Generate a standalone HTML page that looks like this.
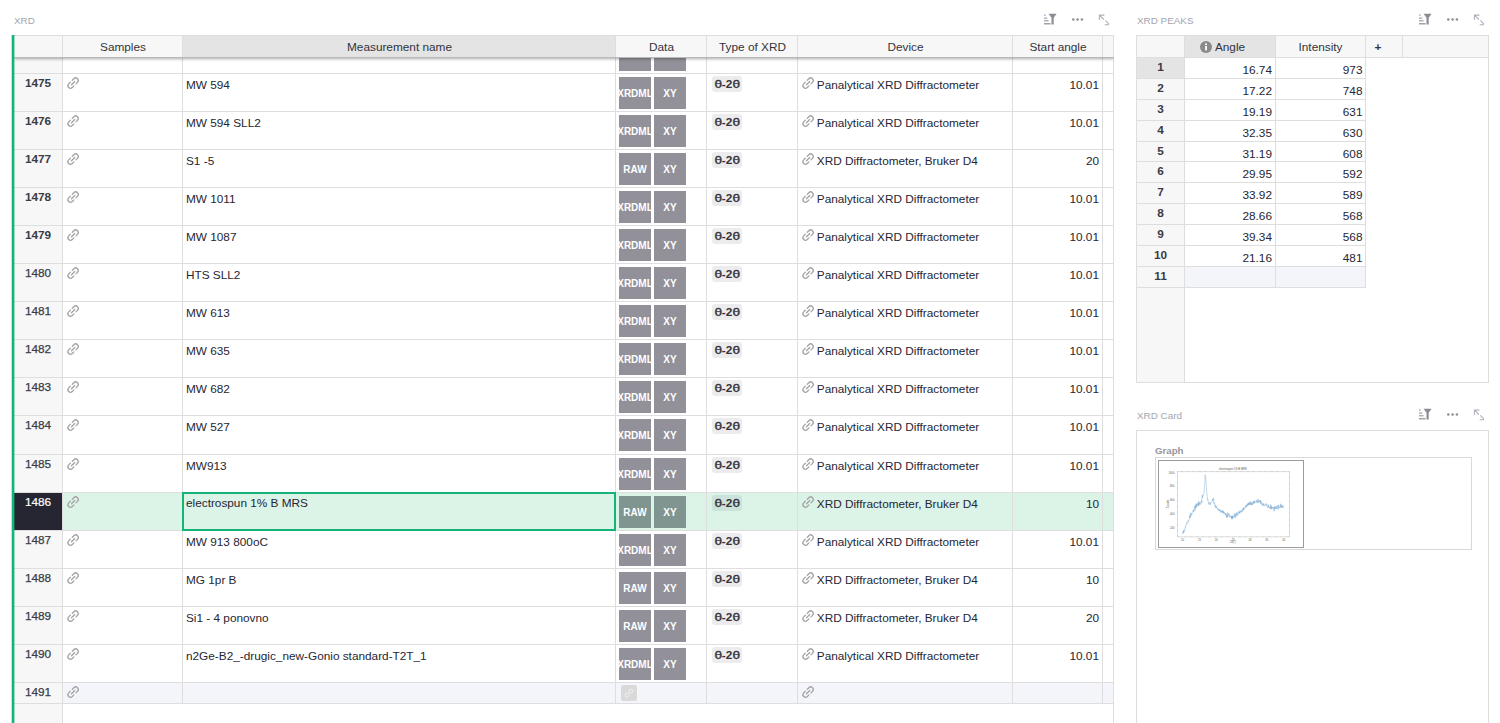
<!DOCTYPE html><html><head><meta charset="utf-8"><title>XRD</title><style>
*{box-sizing:border-box;margin:0;padding:0}
html,body{width:1500px;height:723px;overflow:hidden;background:#fff}
body{position:relative;font-family:"Liberation Sans",sans-serif;font-size:11.8px;color:#262633}
.abs{position:absolute}
.ttl{position:absolute;font-size:9.9px;color:#a4a4b0;line-height:12px;white-space:nowrap}
.ico{position:absolute;top:13px;width:70px;height:14px}
.grid{position:absolute;left:14px;top:35px;width:1100px;height:688px;overflow:hidden}
.bar{position:absolute;left:11px;top:35px;width:4px;height:688px;z-index:5;background:linear-gradient(90deg,rgba(22,179,120,.3) 0,rgba(22,179,120,.3) 1px,#16b378 1px,#16b378 3px,rgba(22,179,120,.4) 3px)}
.hl{position:absolute;left:0;height:1px;background:#dedede;width:1100px}
.vl{position:absolute;top:0;width:1px;background:#dedede}
.rn{position:absolute;left:0;width:48px;background:#f7f7f7;text-align:center;font-weight:bold;line-height:14px;padding-top:1.5px;color:#3b3b45}
.row{position:absolute;left:48px;width:1052px}
.c{position:absolute;top:0;height:38px;line-height:14px;white-space:nowrap;overflow:hidden}
.lk{position:absolute;width:16.2px;height:16.2px;color:#a3a3a3}
.btn{position:absolute;top:3px;width:32px;height:32px;background:#929199;color:#fff;font-weight:bold;font-size:10px;line-height:32px;text-align:center;overflow:hidden;white-space:nowrap}
.btn span{position:absolute;left:50%;top:1px;transform:translateX(-50%)}
.chip{position:absolute;left:5px;top:2px;height:16px;padding:0 2.6px 0 2.8px;border-radius:3px;background:#ececec;font-weight:bold;line-height:16px;color:#33333d}
.chip i{font-style:normal;font-weight:normal;display:inline-block;transform:scaleX(1.16);margin:0 .25px;-webkit-text-stroke:.35px #33333d}
.sel .btn{background:#80958f}
.sel .chip{background:#cbe3da}
.hd{position:absolute;top:0;height:22px;background:#f7f7f7;text-align:center;line-height:22px;padding-top:1px;color:#33333d;white-space:nowrap}
.hdr{position:absolute;left:0;top:0;width:1100px;height:23px;box-shadow:0 1px 3px rgba(0,0,0,.33);background:#f7f7f7;border-bottom:1px solid #b9b9b9}
.sel{background:#dcf3e8}
.pk{position:absolute;left:1136px;top:35px;width:353px;height:348px;border:1px solid #dedede;background:#fff;overflow:hidden}
.card{position:absolute;left:1136px;top:430px;width:353px;height:300px;border:1px solid #dedede;background:#fff}
</style></head><body>
<div class="ttl" style="left:14px;top:14.5px">XRD</div>
<svg class="ico" style="left:1039px;top:13px" viewBox="0 0 70 14"><g fill="#8c8c95"><rect x="5" y="1.6" width="1.6" height="1"/><rect x="5" y="4.6" width="3.2" height="1"/><rect x="5" y="7.3" width="4.6" height="1"/><rect x="5" y="10.2" width="6.6" height="1.2"/><path d="M9.6 0.8h8l-2.9 4v6.8h-2.2V4.8z"/></g><g fill="#8c8c95"><circle cx="34.3" cy="6.5" r="1.25"/><circle cx="38.6" cy="6.5" r="1.25"/><circle cx="42.9" cy="6.5" r="1.25"/></g><g fill="none" stroke="#b0b0be" stroke-width="1.05"><path d="M60.4 2.1l4.5 4.4M60.4 7V2.1h5M66.3 7.3l4.4 4.4M70.7 6.8v4.9h-5"/></g></svg>
<div class="ttl" style="left:1137px;top:14.5px">XRD PEAKS</div>
<svg class="ico" style="left:1414px;top:13px" viewBox="0 0 70 14"><g fill="#8c8c95"><rect x="5" y="1.6" width="1.6" height="1"/><rect x="5" y="4.6" width="3.2" height="1"/><rect x="5" y="7.3" width="4.6" height="1"/><rect x="5" y="10.2" width="6.6" height="1.2"/><path d="M9.6 0.8h8l-2.9 4v6.8h-2.2V4.8z"/></g><g fill="#8c8c95"><circle cx="34.3" cy="6.5" r="1.25"/><circle cx="38.6" cy="6.5" r="1.25"/><circle cx="42.9" cy="6.5" r="1.25"/></g><g fill="none" stroke="#b0b0be" stroke-width="1.05"><path d="M60.4 2.1l4.5 4.4M60.4 7V2.1h5M66.3 7.3l4.4 4.4M70.7 6.8v4.9h-5"/></g></svg>
<div class="ttl" style="left:1137px;top:410px">XRD Card</div>
<svg class="ico" style="left:1414px;top:408px" viewBox="0 0 70 14"><g fill="#8c8c95"><rect x="5" y="1.6" width="1.6" height="1"/><rect x="5" y="4.6" width="3.2" height="1"/><rect x="5" y="7.3" width="4.6" height="1"/><rect x="5" y="10.2" width="6.6" height="1.2"/><path d="M9.6 0.8h8l-2.9 4v6.8h-2.2V4.8z"/></g><g fill="#8c8c95"><circle cx="34.3" cy="6.5" r="1.25"/><circle cx="38.6" cy="6.5" r="1.25"/><circle cx="42.9" cy="6.5" r="1.25"/></g><g fill="none" stroke="#b0b0be" stroke-width="1.05"><path d="M60.4 2.1l4.5 4.4M60.4 7V2.1h5M66.3 7.3l4.4 4.4M70.7 6.8v4.9h-5"/></g></svg>
<div class="bar"></div>
<div class="grid">
<div class="abs" style="left:0;top:0;width:48px;height:688px;background:#f7f7f7"></div>
<div class="row" style="top:1px;height:37px"><div class="c" style="left:1px;width:119px"><svg class="lk" style="left:1.9px;top:1.2px" viewBox="0 0 24 24"><g transform="rotate(-45 12 12)" fill="none" stroke="currentColor" stroke-width="1.9" stroke-linecap="round"><path d="M9.9 8.2H6.6a3.8 3.8 0 0 0 0 7.6h3.3"/><path d="M14.1 8.2h3.3a3.8 3.8 0 0 1 0 7.6h-3.3"/><path d="M8.6 12h6.8"/></g></svg></div><div class="c" style="left:121px;width:432px;padding:4.4px 0 0 3px"></div><div class="c" style="left:554px;width:90px"><div class="btn" style="left:3px"><span></span></div><div class="btn" style="left:38px"><span></span></div></div><div class="c" style="left:645px;width:90px"><div class="chip"><i>θ</i>-2<i>θ</i></div></div><div class="c" style="left:736px;width:214px;padding:4.4px 0 0 18.8px"></div><div class="c" style="left:951px;width:89px;padding:4.4px 3px 0 0;text-align:right"></div></div><div class="rn" style="top:1px;height:37px"></div>
<div class="row" style="top:39px;height:37px"><div class="c" style="left:1px;width:119px"><svg class="lk" style="left:1.9px;top:1.2px" viewBox="0 0 24 24"><g transform="rotate(-45 12 12)" fill="none" stroke="currentColor" stroke-width="1.9" stroke-linecap="round"><path d="M9.9 8.2H6.6a3.8 3.8 0 0 0 0 7.6h3.3"/><path d="M14.1 8.2h3.3a3.8 3.8 0 0 1 0 7.6h-3.3"/><path d="M8.6 12h6.8"/></g></svg></div><div class="c" style="left:121px;width:432px;padding:4.4px 0 0 3px">MW 594</div><div class="c" style="left:554px;width:90px"><div class="btn" style="left:3px"><span>XRDML</span></div><div class="btn" style="left:38px"><span>XY</span></div></div><div class="c" style="left:645px;width:90px"><div class="chip"><i>θ</i>-2<i>θ</i></div></div><div class="c" style="left:736px;width:214px;padding:4.4px 0 0 18.8px"><svg class="lk" style="left:1.9px;top:1.2px" viewBox="0 0 24 24"><g transform="rotate(-45 12 12)" fill="none" stroke="currentColor" stroke-width="1.9" stroke-linecap="round"><path d="M9.9 8.2H6.6a3.8 3.8 0 0 0 0 7.6h3.3"/><path d="M14.1 8.2h3.3a3.8 3.8 0 0 1 0 7.6h-3.3"/><path d="M8.6 12h6.8"/></g></svg>Panalytical XRD Diffractometer</div><div class="c" style="left:951px;width:89px;padding:4.4px 3px 0 0;text-align:right">10.01</div></div><div class="rn" style="top:39px;height:37px">1475</div>
<div class="row" style="top:77px;height:37px"><div class="c" style="left:1px;width:119px"><svg class="lk" style="left:1.9px;top:1.2px" viewBox="0 0 24 24"><g transform="rotate(-45 12 12)" fill="none" stroke="currentColor" stroke-width="1.9" stroke-linecap="round"><path d="M9.9 8.2H6.6a3.8 3.8 0 0 0 0 7.6h3.3"/><path d="M14.1 8.2h3.3a3.8 3.8 0 0 1 0 7.6h-3.3"/><path d="M8.6 12h6.8"/></g></svg></div><div class="c" style="left:121px;width:432px;padding:4.4px 0 0 3px">MW 594 SLL2</div><div class="c" style="left:554px;width:90px"><div class="btn" style="left:3px"><span>XRDML</span></div><div class="btn" style="left:38px"><span>XY</span></div></div><div class="c" style="left:645px;width:90px"><div class="chip"><i>θ</i>-2<i>θ</i></div></div><div class="c" style="left:736px;width:214px;padding:4.4px 0 0 18.8px"><svg class="lk" style="left:1.9px;top:1.2px" viewBox="0 0 24 24"><g transform="rotate(-45 12 12)" fill="none" stroke="currentColor" stroke-width="1.9" stroke-linecap="round"><path d="M9.9 8.2H6.6a3.8 3.8 0 0 0 0 7.6h3.3"/><path d="M14.1 8.2h3.3a3.8 3.8 0 0 1 0 7.6h-3.3"/><path d="M8.6 12h6.8"/></g></svg>Panalytical XRD Diffractometer</div><div class="c" style="left:951px;width:89px;padding:4.4px 3px 0 0;text-align:right">10.01</div></div><div class="rn" style="top:77px;height:37px">1476</div>
<div class="row" style="top:115px;height:37px"><div class="c" style="left:1px;width:119px"><svg class="lk" style="left:1.9px;top:1.2px" viewBox="0 0 24 24"><g transform="rotate(-45 12 12)" fill="none" stroke="currentColor" stroke-width="1.9" stroke-linecap="round"><path d="M9.9 8.2H6.6a3.8 3.8 0 0 0 0 7.6h3.3"/><path d="M14.1 8.2h3.3a3.8 3.8 0 0 1 0 7.6h-3.3"/><path d="M8.6 12h6.8"/></g></svg></div><div class="c" style="left:121px;width:432px;padding:4.4px 0 0 3px">S1 -5</div><div class="c" style="left:554px;width:90px"><div class="btn" style="left:3px"><span>RAW</span></div><div class="btn" style="left:38px"><span>XY</span></div></div><div class="c" style="left:645px;width:90px"><div class="chip"><i>θ</i>-2<i>θ</i></div></div><div class="c" style="left:736px;width:214px;padding:4.4px 0 0 18.8px"><svg class="lk" style="left:1.9px;top:1.2px" viewBox="0 0 24 24"><g transform="rotate(-45 12 12)" fill="none" stroke="currentColor" stroke-width="1.9" stroke-linecap="round"><path d="M9.9 8.2H6.6a3.8 3.8 0 0 0 0 7.6h3.3"/><path d="M14.1 8.2h3.3a3.8 3.8 0 0 1 0 7.6h-3.3"/><path d="M8.6 12h6.8"/></g></svg>XRD Diffractometer, Bruker D4</div><div class="c" style="left:951px;width:89px;padding:4.4px 3px 0 0;text-align:right">20</div></div><div class="rn" style="top:115px;height:37px">1477</div>
<div class="row" style="top:153px;height:37px"><div class="c" style="left:1px;width:119px"><svg class="lk" style="left:1.9px;top:1.2px" viewBox="0 0 24 24"><g transform="rotate(-45 12 12)" fill="none" stroke="currentColor" stroke-width="1.9" stroke-linecap="round"><path d="M9.9 8.2H6.6a3.8 3.8 0 0 0 0 7.6h3.3"/><path d="M14.1 8.2h3.3a3.8 3.8 0 0 1 0 7.6h-3.3"/><path d="M8.6 12h6.8"/></g></svg></div><div class="c" style="left:121px;width:432px;padding:4.4px 0 0 3px">MW 1011</div><div class="c" style="left:554px;width:90px"><div class="btn" style="left:3px"><span>XRDML</span></div><div class="btn" style="left:38px"><span>XY</span></div></div><div class="c" style="left:645px;width:90px"><div class="chip"><i>θ</i>-2<i>θ</i></div></div><div class="c" style="left:736px;width:214px;padding:4.4px 0 0 18.8px"><svg class="lk" style="left:1.9px;top:1.2px" viewBox="0 0 24 24"><g transform="rotate(-45 12 12)" fill="none" stroke="currentColor" stroke-width="1.9" stroke-linecap="round"><path d="M9.9 8.2H6.6a3.8 3.8 0 0 0 0 7.6h3.3"/><path d="M14.1 8.2h3.3a3.8 3.8 0 0 1 0 7.6h-3.3"/><path d="M8.6 12h6.8"/></g></svg>Panalytical XRD Diffractometer</div><div class="c" style="left:951px;width:89px;padding:4.4px 3px 0 0;text-align:right">10.01</div></div><div class="rn" style="top:153px;height:37px">1478</div>
<div class="row" style="top:191px;height:37px"><div class="c" style="left:1px;width:119px"><svg class="lk" style="left:1.9px;top:1.2px" viewBox="0 0 24 24"><g transform="rotate(-45 12 12)" fill="none" stroke="currentColor" stroke-width="1.9" stroke-linecap="round"><path d="M9.9 8.2H6.6a3.8 3.8 0 0 0 0 7.6h3.3"/><path d="M14.1 8.2h3.3a3.8 3.8 0 0 1 0 7.6h-3.3"/><path d="M8.6 12h6.8"/></g></svg></div><div class="c" style="left:121px;width:432px;padding:4.4px 0 0 3px">MW 1087</div><div class="c" style="left:554px;width:90px"><div class="btn" style="left:3px"><span>XRDML</span></div><div class="btn" style="left:38px"><span>XY</span></div></div><div class="c" style="left:645px;width:90px"><div class="chip"><i>θ</i>-2<i>θ</i></div></div><div class="c" style="left:736px;width:214px;padding:4.4px 0 0 18.8px"><svg class="lk" style="left:1.9px;top:1.2px" viewBox="0 0 24 24"><g transform="rotate(-45 12 12)" fill="none" stroke="currentColor" stroke-width="1.9" stroke-linecap="round"><path d="M9.9 8.2H6.6a3.8 3.8 0 0 0 0 7.6h3.3"/><path d="M14.1 8.2h3.3a3.8 3.8 0 0 1 0 7.6h-3.3"/><path d="M8.6 12h6.8"/></g></svg>Panalytical XRD Diffractometer</div><div class="c" style="left:951px;width:89px;padding:4.4px 3px 0 0;text-align:right">10.01</div></div><div class="rn" style="top:191px;height:37px">1479</div>
<div class="row" style="top:229px;height:37px"><div class="c" style="left:1px;width:119px"><svg class="lk" style="left:1.9px;top:1.2px" viewBox="0 0 24 24"><g transform="rotate(-45 12 12)" fill="none" stroke="currentColor" stroke-width="1.9" stroke-linecap="round"><path d="M9.9 8.2H6.6a3.8 3.8 0 0 0 0 7.6h3.3"/><path d="M14.1 8.2h3.3a3.8 3.8 0 0 1 0 7.6h-3.3"/><path d="M8.6 12h6.8"/></g></svg></div><div class="c" style="left:121px;width:432px;padding:4.4px 0 0 3px">HTS SLL2</div><div class="c" style="left:554px;width:90px"><div class="btn" style="left:3px"><span>XRDML</span></div><div class="btn" style="left:38px"><span>XY</span></div></div><div class="c" style="left:645px;width:90px"><div class="chip"><i>θ</i>-2<i>θ</i></div></div><div class="c" style="left:736px;width:214px;padding:4.4px 0 0 18.8px"><svg class="lk" style="left:1.9px;top:1.2px" viewBox="0 0 24 24"><g transform="rotate(-45 12 12)" fill="none" stroke="currentColor" stroke-width="1.9" stroke-linecap="round"><path d="M9.9 8.2H6.6a3.8 3.8 0 0 0 0 7.6h3.3"/><path d="M14.1 8.2h3.3a3.8 3.8 0 0 1 0 7.6h-3.3"/><path d="M8.6 12h6.8"/></g></svg>Panalytical XRD Diffractometer</div><div class="c" style="left:951px;width:89px;padding:4.4px 3px 0 0;text-align:right">10.01</div></div><div class="rn" style="top:229px;height:37px;font-weight:normal;-webkit-text-stroke:.25px #3b3b45">1480</div>
<div class="row" style="top:267px;height:37px"><div class="c" style="left:1px;width:119px"><svg class="lk" style="left:1.9px;top:1.2px" viewBox="0 0 24 24"><g transform="rotate(-45 12 12)" fill="none" stroke="currentColor" stroke-width="1.9" stroke-linecap="round"><path d="M9.9 8.2H6.6a3.8 3.8 0 0 0 0 7.6h3.3"/><path d="M14.1 8.2h3.3a3.8 3.8 0 0 1 0 7.6h-3.3"/><path d="M8.6 12h6.8"/></g></svg></div><div class="c" style="left:121px;width:432px;padding:4.4px 0 0 3px">MW 613</div><div class="c" style="left:554px;width:90px"><div class="btn" style="left:3px"><span>XRDML</span></div><div class="btn" style="left:38px"><span>XY</span></div></div><div class="c" style="left:645px;width:90px"><div class="chip"><i>θ</i>-2<i>θ</i></div></div><div class="c" style="left:736px;width:214px;padding:4.4px 0 0 18.8px"><svg class="lk" style="left:1.9px;top:1.2px" viewBox="0 0 24 24"><g transform="rotate(-45 12 12)" fill="none" stroke="currentColor" stroke-width="1.9" stroke-linecap="round"><path d="M9.9 8.2H6.6a3.8 3.8 0 0 0 0 7.6h3.3"/><path d="M14.1 8.2h3.3a3.8 3.8 0 0 1 0 7.6h-3.3"/><path d="M8.6 12h6.8"/></g></svg>Panalytical XRD Diffractometer</div><div class="c" style="left:951px;width:89px;padding:4.4px 3px 0 0;text-align:right">10.01</div></div><div class="rn" style="top:267px;height:37px;font-weight:normal;-webkit-text-stroke:.25px #3b3b45">1481</div>
<div class="row" style="top:305px;height:37px"><div class="c" style="left:1px;width:119px"><svg class="lk" style="left:1.9px;top:1.2px" viewBox="0 0 24 24"><g transform="rotate(-45 12 12)" fill="none" stroke="currentColor" stroke-width="1.9" stroke-linecap="round"><path d="M9.9 8.2H6.6a3.8 3.8 0 0 0 0 7.6h3.3"/><path d="M14.1 8.2h3.3a3.8 3.8 0 0 1 0 7.6h-3.3"/><path d="M8.6 12h6.8"/></g></svg></div><div class="c" style="left:121px;width:432px;padding:4.4px 0 0 3px">MW 635</div><div class="c" style="left:554px;width:90px"><div class="btn" style="left:3px"><span>XRDML</span></div><div class="btn" style="left:38px"><span>XY</span></div></div><div class="c" style="left:645px;width:90px"><div class="chip"><i>θ</i>-2<i>θ</i></div></div><div class="c" style="left:736px;width:214px;padding:4.4px 0 0 18.8px"><svg class="lk" style="left:1.9px;top:1.2px" viewBox="0 0 24 24"><g transform="rotate(-45 12 12)" fill="none" stroke="currentColor" stroke-width="1.9" stroke-linecap="round"><path d="M9.9 8.2H6.6a3.8 3.8 0 0 0 0 7.6h3.3"/><path d="M14.1 8.2h3.3a3.8 3.8 0 0 1 0 7.6h-3.3"/><path d="M8.6 12h6.8"/></g></svg>Panalytical XRD Diffractometer</div><div class="c" style="left:951px;width:89px;padding:4.4px 3px 0 0;text-align:right">10.01</div></div><div class="rn" style="top:305px;height:37px;font-weight:normal;-webkit-text-stroke:.25px #3b3b45">1482</div>
<div class="row" style="top:343px;height:37px"><div class="c" style="left:1px;width:119px"><svg class="lk" style="left:1.9px;top:1.2px" viewBox="0 0 24 24"><g transform="rotate(-45 12 12)" fill="none" stroke="currentColor" stroke-width="1.9" stroke-linecap="round"><path d="M9.9 8.2H6.6a3.8 3.8 0 0 0 0 7.6h3.3"/><path d="M14.1 8.2h3.3a3.8 3.8 0 0 1 0 7.6h-3.3"/><path d="M8.6 12h6.8"/></g></svg></div><div class="c" style="left:121px;width:432px;padding:4.4px 0 0 3px">MW 682</div><div class="c" style="left:554px;width:90px"><div class="btn" style="left:3px"><span>XRDML</span></div><div class="btn" style="left:38px"><span>XY</span></div></div><div class="c" style="left:645px;width:90px"><div class="chip"><i>θ</i>-2<i>θ</i></div></div><div class="c" style="left:736px;width:214px;padding:4.4px 0 0 18.8px"><svg class="lk" style="left:1.9px;top:1.2px" viewBox="0 0 24 24"><g transform="rotate(-45 12 12)" fill="none" stroke="currentColor" stroke-width="1.9" stroke-linecap="round"><path d="M9.9 8.2H6.6a3.8 3.8 0 0 0 0 7.6h3.3"/><path d="M14.1 8.2h3.3a3.8 3.8 0 0 1 0 7.6h-3.3"/><path d="M8.6 12h6.8"/></g></svg>Panalytical XRD Diffractometer</div><div class="c" style="left:951px;width:89px;padding:4.4px 3px 0 0;text-align:right">10.01</div></div><div class="rn" style="top:343px;height:37px;font-weight:normal;-webkit-text-stroke:.25px #3b3b45">1483</div>
<div class="row" style="top:381px;height:38px"><div class="c" style="left:1px;width:119px"><svg class="lk" style="left:1.9px;top:1.2px" viewBox="0 0 24 24"><g transform="rotate(-45 12 12)" fill="none" stroke="currentColor" stroke-width="1.9" stroke-linecap="round"><path d="M9.9 8.2H6.6a3.8 3.8 0 0 0 0 7.6h3.3"/><path d="M14.1 8.2h3.3a3.8 3.8 0 0 1 0 7.6h-3.3"/><path d="M8.6 12h6.8"/></g></svg></div><div class="c" style="left:121px;width:432px;padding:4.4px 0 0 3px">MW 527</div><div class="c" style="left:554px;width:90px"><div class="btn" style="left:3px"><span>XRDML</span></div><div class="btn" style="left:38px"><span>XY</span></div></div><div class="c" style="left:645px;width:90px"><div class="chip"><i>θ</i>-2<i>θ</i></div></div><div class="c" style="left:736px;width:214px;padding:4.4px 0 0 18.8px"><svg class="lk" style="left:1.9px;top:1.2px" viewBox="0 0 24 24"><g transform="rotate(-45 12 12)" fill="none" stroke="currentColor" stroke-width="1.9" stroke-linecap="round"><path d="M9.9 8.2H6.6a3.8 3.8 0 0 0 0 7.6h3.3"/><path d="M14.1 8.2h3.3a3.8 3.8 0 0 1 0 7.6h-3.3"/><path d="M8.6 12h6.8"/></g></svg>Panalytical XRD Diffractometer</div><div class="c" style="left:951px;width:89px;padding:4.4px 3px 0 0;text-align:right">10.01</div></div><div class="rn" style="top:381px;height:38px;font-weight:normal;-webkit-text-stroke:.25px #3b3b45">1484</div>
<div class="row" style="top:420px;height:37px"><div class="c" style="left:1px;width:119px"><svg class="lk" style="left:1.9px;top:1.2px" viewBox="0 0 24 24"><g transform="rotate(-45 12 12)" fill="none" stroke="currentColor" stroke-width="1.9" stroke-linecap="round"><path d="M9.9 8.2H6.6a3.8 3.8 0 0 0 0 7.6h3.3"/><path d="M14.1 8.2h3.3a3.8 3.8 0 0 1 0 7.6h-3.3"/><path d="M8.6 12h6.8"/></g></svg></div><div class="c" style="left:121px;width:432px;padding:4.4px 0 0 3px">MW913</div><div class="c" style="left:554px;width:90px"><div class="btn" style="left:3px"><span>XRDML</span></div><div class="btn" style="left:38px"><span>XY</span></div></div><div class="c" style="left:645px;width:90px"><div class="chip"><i>θ</i>-2<i>θ</i></div></div><div class="c" style="left:736px;width:214px;padding:4.4px 0 0 18.8px"><svg class="lk" style="left:1.9px;top:1.2px" viewBox="0 0 24 24"><g transform="rotate(-45 12 12)" fill="none" stroke="currentColor" stroke-width="1.9" stroke-linecap="round"><path d="M9.9 8.2H6.6a3.8 3.8 0 0 0 0 7.6h3.3"/><path d="M14.1 8.2h3.3a3.8 3.8 0 0 1 0 7.6h-3.3"/><path d="M8.6 12h6.8"/></g></svg>Panalytical XRD Diffractometer</div><div class="c" style="left:951px;width:89px;padding:4.4px 3px 0 0;text-align:right">10.01</div></div><div class="rn" style="top:420px;height:37px;font-weight:normal;-webkit-text-stroke:.25px #3b3b45">1485</div>
<div class="row sel" style="top:458px;height:37px"><div class="c" style="left:1px;width:119px"><svg class="lk" style="left:1.9px;top:1.2px" viewBox="0 0 24 24"><g transform="rotate(-45 12 12)" fill="none" stroke="currentColor" stroke-width="1.9" stroke-linecap="round"><path d="M9.9 8.2H6.6a3.8 3.8 0 0 0 0 7.6h3.3"/><path d="M14.1 8.2h3.3a3.8 3.8 0 0 1 0 7.6h-3.3"/><path d="M8.6 12h6.8"/></g></svg></div><div class="c" style="left:121px;width:432px;padding:3.4px 0 0 3px">electrospun 1% B MRS</div><div class="c" style="left:554px;width:90px"><div class="btn" style="left:3px"><span>RAW</span></div><div class="btn" style="left:38px"><span>XY</span></div></div><div class="c" style="left:645px;width:90px"><div class="chip"><i>θ</i>-2<i>θ</i></div></div><div class="c" style="left:736px;width:214px;padding:4.4px 0 0 18.8px"><svg class="lk" style="left:1.9px;top:1.2px" viewBox="0 0 24 24"><g transform="rotate(-45 12 12)" fill="none" stroke="currentColor" stroke-width="1.9" stroke-linecap="round"><path d="M9.9 8.2H6.6a3.8 3.8 0 0 0 0 7.6h3.3"/><path d="M14.1 8.2h3.3a3.8 3.8 0 0 1 0 7.6h-3.3"/><path d="M8.6 12h6.8"/></g></svg>XRD Diffractometer, Bruker D4</div><div class="c" style="left:951px;width:89px;padding:4.4px 3px 0 0;text-align:right">10</div></div><div class="rn" style="top:458px;height:37px;background:#262633;color:#fff;font-weight:normal;-webkit-text-stroke:.2px #fff">1486</div>
<div class="row" style="top:496px;height:37px"><div class="c" style="left:1px;width:119px"><svg class="lk" style="left:1.9px;top:1.2px" viewBox="0 0 24 24"><g transform="rotate(-45 12 12)" fill="none" stroke="currentColor" stroke-width="1.9" stroke-linecap="round"><path d="M9.9 8.2H6.6a3.8 3.8 0 0 0 0 7.6h3.3"/><path d="M14.1 8.2h3.3a3.8 3.8 0 0 1 0 7.6h-3.3"/><path d="M8.6 12h6.8"/></g></svg></div><div class="c" style="left:121px;width:432px;padding:4.4px 0 0 3px">MW 913 800oC</div><div class="c" style="left:554px;width:90px"><div class="btn" style="left:3px"><span>XRDML</span></div><div class="btn" style="left:38px"><span>XY</span></div></div><div class="c" style="left:645px;width:90px"><div class="chip"><i>θ</i>-2<i>θ</i></div></div><div class="c" style="left:736px;width:214px;padding:4.4px 0 0 18.8px"><svg class="lk" style="left:1.9px;top:1.2px" viewBox="0 0 24 24"><g transform="rotate(-45 12 12)" fill="none" stroke="currentColor" stroke-width="1.9" stroke-linecap="round"><path d="M9.9 8.2H6.6a3.8 3.8 0 0 0 0 7.6h3.3"/><path d="M14.1 8.2h3.3a3.8 3.8 0 0 1 0 7.6h-3.3"/><path d="M8.6 12h6.8"/></g></svg>Panalytical XRD Diffractometer</div><div class="c" style="left:951px;width:89px;padding:4.4px 3px 0 0;text-align:right">10.01</div></div><div class="rn" style="top:496px;height:37px;font-weight:normal;-webkit-text-stroke:.25px #3b3b45">1487</div>
<div class="row" style="top:534px;height:37px"><div class="c" style="left:1px;width:119px"><svg class="lk" style="left:1.9px;top:1.2px" viewBox="0 0 24 24"><g transform="rotate(-45 12 12)" fill="none" stroke="currentColor" stroke-width="1.9" stroke-linecap="round"><path d="M9.9 8.2H6.6a3.8 3.8 0 0 0 0 7.6h3.3"/><path d="M14.1 8.2h3.3a3.8 3.8 0 0 1 0 7.6h-3.3"/><path d="M8.6 12h6.8"/></g></svg></div><div class="c" style="left:121px;width:432px;padding:4.4px 0 0 3px">MG 1pr B</div><div class="c" style="left:554px;width:90px"><div class="btn" style="left:3px"><span>RAW</span></div><div class="btn" style="left:38px"><span>XY</span></div></div><div class="c" style="left:645px;width:90px"><div class="chip"><i>θ</i>-2<i>θ</i></div></div><div class="c" style="left:736px;width:214px;padding:4.4px 0 0 18.8px"><svg class="lk" style="left:1.9px;top:1.2px" viewBox="0 0 24 24"><g transform="rotate(-45 12 12)" fill="none" stroke="currentColor" stroke-width="1.9" stroke-linecap="round"><path d="M9.9 8.2H6.6a3.8 3.8 0 0 0 0 7.6h3.3"/><path d="M14.1 8.2h3.3a3.8 3.8 0 0 1 0 7.6h-3.3"/><path d="M8.6 12h6.8"/></g></svg>XRD Diffractometer, Bruker D4</div><div class="c" style="left:951px;width:89px;padding:4.4px 3px 0 0;text-align:right">10</div></div><div class="rn" style="top:534px;height:37px;font-weight:normal;-webkit-text-stroke:.25px #3b3b45">1488</div>
<div class="row" style="top:572px;height:37px"><div class="c" style="left:1px;width:119px"><svg class="lk" style="left:1.9px;top:1.2px" viewBox="0 0 24 24"><g transform="rotate(-45 12 12)" fill="none" stroke="currentColor" stroke-width="1.9" stroke-linecap="round"><path d="M9.9 8.2H6.6a3.8 3.8 0 0 0 0 7.6h3.3"/><path d="M14.1 8.2h3.3a3.8 3.8 0 0 1 0 7.6h-3.3"/><path d="M8.6 12h6.8"/></g></svg></div><div class="c" style="left:121px;width:432px;padding:4.4px 0 0 3px">Si1 - 4 ponovno</div><div class="c" style="left:554px;width:90px"><div class="btn" style="left:3px"><span>RAW</span></div><div class="btn" style="left:38px"><span>XY</span></div></div><div class="c" style="left:645px;width:90px"><div class="chip"><i>θ</i>-2<i>θ</i></div></div><div class="c" style="left:736px;width:214px;padding:4.4px 0 0 18.8px"><svg class="lk" style="left:1.9px;top:1.2px" viewBox="0 0 24 24"><g transform="rotate(-45 12 12)" fill="none" stroke="currentColor" stroke-width="1.9" stroke-linecap="round"><path d="M9.9 8.2H6.6a3.8 3.8 0 0 0 0 7.6h3.3"/><path d="M14.1 8.2h3.3a3.8 3.8 0 0 1 0 7.6h-3.3"/><path d="M8.6 12h6.8"/></g></svg>XRD Diffractometer, Bruker D4</div><div class="c" style="left:951px;width:89px;padding:4.4px 3px 0 0;text-align:right">20</div></div><div class="rn" style="top:572px;height:37px;font-weight:normal;-webkit-text-stroke:.25px #3b3b45">1489</div>
<div class="row" style="top:610px;height:37px"><div class="c" style="left:1px;width:119px"><svg class="lk" style="left:1.9px;top:1.2px" viewBox="0 0 24 24"><g transform="rotate(-45 12 12)" fill="none" stroke="currentColor" stroke-width="1.9" stroke-linecap="round"><path d="M9.9 8.2H6.6a3.8 3.8 0 0 0 0 7.6h3.3"/><path d="M14.1 8.2h3.3a3.8 3.8 0 0 1 0 7.6h-3.3"/><path d="M8.6 12h6.8"/></g></svg></div><div class="c" style="left:121px;width:432px;padding:4.4px 0 0 3px">n2Ge-B2_-drugic_new-Gonio standard-T2T_1</div><div class="c" style="left:554px;width:90px"><div class="btn" style="left:3px"><span>XRDML</span></div><div class="btn" style="left:38px"><span>XY</span></div></div><div class="c" style="left:645px;width:90px"><div class="chip"><i>θ</i>-2<i>θ</i></div></div><div class="c" style="left:736px;width:214px;padding:4.4px 0 0 18.8px"><svg class="lk" style="left:1.9px;top:1.2px" viewBox="0 0 24 24"><g transform="rotate(-45 12 12)" fill="none" stroke="currentColor" stroke-width="1.9" stroke-linecap="round"><path d="M9.9 8.2H6.6a3.8 3.8 0 0 0 0 7.6h3.3"/><path d="M14.1 8.2h3.3a3.8 3.8 0 0 1 0 7.6h-3.3"/><path d="M8.6 12h6.8"/></g></svg>Panalytical XRD Diffractometer</div><div class="c" style="left:951px;width:89px;padding:4.4px 3px 0 0;text-align:right">10.01</div></div><div class="rn" style="top:610px;height:37px;font-weight:normal;-webkit-text-stroke:.25px #3b3b45">1490</div>
<div class="row" style="top:648px;height:20px;background:#f4f4fb"><div class="c" style="left:1px;width:119px;height:20px"><svg class="lk" style="left:1.9px;top:1.2px" viewBox="0 0 24 24"><g transform="rotate(-45 12 12)" fill="none" stroke="currentColor" stroke-width="1.9" stroke-linecap="round"><path d="M9.9 8.2H6.6a3.8 3.8 0 0 0 0 7.6h3.3"/><path d="M14.1 8.2h3.3a3.8 3.8 0 0 1 0 7.6h-3.3"/><path d="M8.6 12h6.8"/></g></svg></div><div class="c" style="left:554px;width:90px;height:20px"><div class="abs" style="left:5px;top:2px;width:16px;height:16px;border-radius:2.5px;background:#d9d9d9"></div><svg class="lk" style="left:7px;top:4px;width:12px;height:12px;color:#efefef" viewBox="0 0 24 24"><g transform="rotate(-45 12 12)" fill="none" stroke="currentColor" stroke-width="1.9" stroke-linecap="round"><path d="M9.9 8.2H6.6a3.8 3.8 0 0 0 0 7.6h3.3"/><path d="M14.1 8.2h3.3a3.8 3.8 0 0 1 0 7.6h-3.3"/><path d="M8.6 12h6.8"/></g></svg></div><div class="c" style="left:736px;width:214px;height:20px"><svg class="lk" style="left:1.9px;top:1.2px" viewBox="0 0 24 24"><g transform="rotate(-45 12 12)" fill="none" stroke="currentColor" stroke-width="1.9" stroke-linecap="round"><path d="M9.9 8.2H6.6a3.8 3.8 0 0 0 0 7.6h3.3"/><path d="M14.1 8.2h3.3a3.8 3.8 0 0 1 0 7.6h-3.3"/><path d="M8.6 12h6.8"/></g></svg></div></div>
<div class="rn" style="top:648px;height:20px;font-weight:normal;-webkit-text-stroke:.25px #3b3b45">1491</div>
<div class="hl" style="top:38px"></div>
<div class="hl" style="top:76px"></div>
<div class="hl" style="top:114px"></div>
<div class="hl" style="top:152px"></div>
<div class="hl" style="top:190px"></div>
<div class="hl" style="top:228px"></div>
<div class="hl" style="top:266px"></div>
<div class="hl" style="top:304px"></div>
<div class="hl" style="top:342px"></div>
<div class="hl" style="top:380px"></div>
<div class="hl" style="top:419px"></div>
<div class="hl" style="top:457px"></div>
<div class="hl" style="top:495px"></div>
<div class="hl" style="top:533px"></div>
<div class="hl" style="top:571px"></div>
<div class="hl" style="top:609px"></div>
<div class="hl" style="top:647px"></div>
<div class="hl" style="top:668px"></div>
<div class="vl" style="left:48px;height:688px"></div>
<div class="vl" style="left:168px;height:668px"></div>
<div class="vl" style="left:601px;height:668px"></div>
<div class="vl" style="left:692px;height:668px"></div>
<div class="vl" style="left:783px;height:668px"></div>
<div class="vl" style="left:998px;height:668px"></div>
<div class="vl" style="left:1088px;height:668px"></div>
<div class="vl" style="left:1099px;height:688px"></div>
<div class="abs" style="left:168px;top:457px;width:434px;height:39px;border:2px solid #16b378"></div>
<div class="hdr">
<div class="hd" style="left:0px;width:48px"></div>
<div class="hd" style="left:49px;width:120px">Samples</div>
<div class="hd" style="left:169px;width:433px;background:#e4e4e4">Measurement name</div>
<div class="hd" style="left:602px;width:91px">Data</div>
<div class="hd" style="left:693px;width:91px">Type of XRD</div>
<div class="hd" style="left:784px;width:215px">Device</div>
<div class="hd" style="left:999px;width:90px">Start angle</div>
<div class="hd" style="left:1089px;width:11px"></div>
<div class="vl" style="left:48px;height:22px"></div>
<div class="vl" style="left:168px;height:22px"></div>
<div class="vl" style="left:601px;height:22px"></div>
<div class="vl" style="left:692px;height:22px"></div>
<div class="vl" style="left:783px;height:22px"></div>
<div class="vl" style="left:998px;height:22px"></div>
<div class="vl" style="left:1088px;height:22px"></div>
<div class="vl" style="left:1099px;height:22px"></div>
<div class="hl" style="top:0"></div>
</div>
</div>
<div class="pk">
<div class="abs" style="left:0;top:0;width:47px;height:348px;background:#f7f7f7"></div>
<div class="abs" style="left:0;top:0;width:353px;height:21px;background:#f7f7f7"></div>
<div class="abs" style="left:48px;top:0;width:90px;height:21px;background:#e4e4e4"></div>
<div class="abs" style="left:0;top:22px;width:47px;height:20px;background:#e4e4e4"></div>
<div class="abs" style="left:48px;top:0;width:90px;height:21px;line-height:21px;padding-top:1px;text-align:center;color:#33333d"><svg style="position:absolute;left:14.5px;top:5px;width:12px;height:12px" viewBox="0 0 12 12"><circle cx="6" cy="6" r="6" fill="#8a8a8a"/><rect x="5.1" y="5" width="1.8" height="4.4" fill="#fff"/><circle cx="6" cy="3.2" r="1.05" fill="#fff"/></svg><span style="padding-left:0px">Angle</span></div>
<div class="abs" style="left:139px;top:0;width:89px;height:21px;line-height:21px;padding-top:1px;text-align:center;color:#33333d">Intensity</div>
<div class="abs" style="left:229px;top:0;width:36px;height:21px;line-height:21px;padding:1px 0 0 8.5px;color:#33333d;font-weight:bold">+</div>
<div class="abs" style="left:0;top:22px;width:47px;height:20px;line-height:14px;padding-top:2.4px;text-align:center;font-weight:bold;color:#3b3b45">1</div>
<div class="abs" style="left:48px;top:22px;width:90px;height:20px;line-height:14px;padding:5px 3px 0 0;text-align:right">16.74</div>
<div class="abs" style="left:139px;top:22px;width:89px;height:20px;line-height:14px;padding:5px 2.5px 0 0;text-align:right">973</div>
<div class="abs" style="left:0;top:43px;width:47px;height:20px;line-height:14px;padding-top:2.4px;text-align:center;font-weight:bold;color:#3b3b45">2</div>
<div class="abs" style="left:48px;top:43px;width:90px;height:20px;line-height:14px;padding:5px 3px 0 0;text-align:right">17.22</div>
<div class="abs" style="left:139px;top:43px;width:89px;height:20px;line-height:14px;padding:5px 2.5px 0 0;text-align:right">748</div>
<div class="abs" style="left:0;top:64px;width:47px;height:20px;line-height:14px;padding-top:2.4px;text-align:center;font-weight:bold;color:#3b3b45">3</div>
<div class="abs" style="left:48px;top:64px;width:90px;height:20px;line-height:14px;padding:5px 3px 0 0;text-align:right">19.19</div>
<div class="abs" style="left:139px;top:64px;width:89px;height:20px;line-height:14px;padding:5px 2.5px 0 0;text-align:right">631</div>
<div class="abs" style="left:0;top:85px;width:47px;height:20px;line-height:14px;padding-top:2.4px;text-align:center;font-weight:bold;color:#3b3b45">4</div>
<div class="abs" style="left:48px;top:85px;width:90px;height:20px;line-height:14px;padding:5px 3px 0 0;text-align:right">32.35</div>
<div class="abs" style="left:139px;top:85px;width:89px;height:20px;line-height:14px;padding:5px 2.5px 0 0;text-align:right">630</div>
<div class="abs" style="left:0;top:106px;width:47px;height:19px;line-height:14px;padding-top:2.4px;text-align:center;font-weight:bold;color:#3b3b45">5</div>
<div class="abs" style="left:48px;top:106px;width:90px;height:19px;line-height:14px;padding:5px 3px 0 0;text-align:right">31.19</div>
<div class="abs" style="left:139px;top:106px;width:89px;height:19px;line-height:14px;padding:5px 2.5px 0 0;text-align:right">608</div>
<div class="abs" style="left:0;top:126px;width:47px;height:20px;line-height:14px;padding-top:2.4px;text-align:center;font-weight:bold;color:#3b3b45">6</div>
<div class="abs" style="left:48px;top:126px;width:90px;height:20px;line-height:14px;padding:5px 3px 0 0;text-align:right">29.95</div>
<div class="abs" style="left:139px;top:126px;width:89px;height:20px;line-height:14px;padding:5px 2.5px 0 0;text-align:right">592</div>
<div class="abs" style="left:0;top:147px;width:47px;height:20px;line-height:14px;padding-top:2.4px;text-align:center;font-weight:bold;color:#3b3b45">7</div>
<div class="abs" style="left:48px;top:147px;width:90px;height:20px;line-height:14px;padding:5px 3px 0 0;text-align:right">33.92</div>
<div class="abs" style="left:139px;top:147px;width:89px;height:20px;line-height:14px;padding:5px 2.5px 0 0;text-align:right">589</div>
<div class="abs" style="left:0;top:168px;width:47px;height:20px;line-height:14px;padding-top:2.4px;text-align:center;font-weight:bold;color:#3b3b45">8</div>
<div class="abs" style="left:48px;top:168px;width:90px;height:20px;line-height:14px;padding:5px 3px 0 0;text-align:right">28.66</div>
<div class="abs" style="left:139px;top:168px;width:89px;height:20px;line-height:14px;padding:5px 2.5px 0 0;text-align:right">568</div>
<div class="abs" style="left:0;top:189px;width:47px;height:20px;line-height:14px;padding-top:2.4px;text-align:center;font-weight:bold;color:#3b3b45">9</div>
<div class="abs" style="left:48px;top:189px;width:90px;height:20px;line-height:14px;padding:5px 3px 0 0;text-align:right">39.34</div>
<div class="abs" style="left:139px;top:189px;width:89px;height:20px;line-height:14px;padding:5px 2.5px 0 0;text-align:right">568</div>
<div class="abs" style="left:0;top:210px;width:47px;height:20px;line-height:14px;padding-top:2.4px;text-align:center;font-weight:bold;color:#3b3b45">10</div>
<div class="abs" style="left:48px;top:210px;width:90px;height:20px;line-height:14px;padding:5px 3px 0 0;text-align:right">21.16</div>
<div class="abs" style="left:139px;top:210px;width:89px;height:20px;line-height:14px;padding:5px 2.5px 0 0;text-align:right">481</div>
<div class="abs" style="left:48px;top:231px;width:180px;height:20px;background:#f4f4fb"></div>
<div class="abs" style="left:0;top:231px;width:47px;height:20px;line-height:14px;padding-top:2.4px;text-align:center;font-weight:bold;color:#3b3b45">11</div>
<div class="abs" style="left:48px;top:231px;width:90px;height:20px;line-height:14px;padding:5px 3px 0 0;text-align:right"></div>
<div class="abs" style="left:139px;top:231px;width:89px;height:20px;line-height:14px;padding:5px 2.5px 0 0;text-align:right"></div>
<div class="abs" style="left:0;top:21px;width:353px;height:1px;background:#dedede"></div>
<div class="abs" style="left:0;top:42px;width:229px;height:1px;background:#dedede"></div>
<div class="abs" style="left:0;top:63px;width:229px;height:1px;background:#dedede"></div>
<div class="abs" style="left:0;top:84px;width:229px;height:1px;background:#dedede"></div>
<div class="abs" style="left:0;top:105px;width:229px;height:1px;background:#dedede"></div>
<div class="abs" style="left:0;top:125px;width:229px;height:1px;background:#dedede"></div>
<div class="abs" style="left:0;top:146px;width:229px;height:1px;background:#dedede"></div>
<div class="abs" style="left:0;top:167px;width:229px;height:1px;background:#dedede"></div>
<div class="abs" style="left:0;top:188px;width:229px;height:1px;background:#dedede"></div>
<div class="abs" style="left:0;top:209px;width:229px;height:1px;background:#dedede"></div>
<div class="abs" style="left:0;top:230px;width:229px;height:1px;background:#dedede"></div>
<div class="abs" style="left:0;top:251px;width:229px;height:1px;background:#dedede"></div>
<div class="abs" style="left:47px;top:0;width:1px;height:348px;background:#dedede"></div>
<div class="abs" style="left:138px;top:0;width:1px;height:251px;background:#dedede"></div>
<div class="abs" style="left:228px;top:0;width:1px;height:251px;background:#dedede"></div>
<div class="abs" style="left:265px;top:0;width:1px;height:21px;background:#dedede"></div>
</div>
<div class="card">
<div class="abs" style="left:18px;top:14.4px;font-size:9.7px;line-height:12px;font-weight:bold;color:#96969d">Graph</div>
<div class="abs" style="left:18px;top:26px;width:317px;height:93px;border:1px solid #d9d9d9"></div>
<svg class="abs" style="left:0;top:0;width:353px;height:200px" viewBox="0 0 353 200"><rect x="21.5" y="29.5" width="145" height="87" fill="#fff" stroke="#9c9c9c" stroke-width="1"/><rect x="40.5" y="40.6" width="112" height="65.2" fill="none" stroke="#777" stroke-width="0.5" stroke-dasharray="0.7 0.5"/><polyline points="45.6,102.1 45.8,103.0 46.1,100.0 46.3,101.8 46.6,99.8 46.8,99.3 47.0,101.4 47.3,98.9 47.5,98.1 47.8,98.6 48.0,98.6 48.2,96.7 48.5,97.0 48.7,94.6 49.0,94.9 49.2,94.3 49.4,92.8 49.7,92.1 49.9,91.5 50.2,92.6 50.4,92.2 50.6,91.6 50.9,91.6 51.1,89.4 51.4,90.4 51.6,90.3 51.8,90.5 52.1,88.0 52.3,87.9 52.6,85.3 52.8,86.5 53.0,83.8 53.3,84.1 53.5,86.5 53.8,81.9 54.0,84.9 54.2,83.7 54.5,82.4 54.7,83.0 54.9,82.8 55.2,83.1 55.4,81.2 55.7,80.5 55.9,80.1 56.1,79.4 56.4,80.2 56.6,79.0 56.9,80.8 57.1,76.8 57.3,77.2 57.6,76.9 57.8,75.1 58.1,79.4 58.3,73.8 58.5,75.8 58.8,75.0 59.0,77.2 59.3,72.5 59.5,75.9 59.7,73.5 60.0,74.0 60.2,73.1 60.5,74.4 60.7,72.1 60.9,73.2 61.2,73.6 61.4,75.2 61.7,70.0 61.9,74.5 62.1,73.7 62.4,71.9 62.6,72.7 62.9,71.5 63.1,73.8 63.3,71.8 63.6,71.1 63.8,70.8 64.1,70.6 64.3,70.4 64.5,69.3 64.8,72.3 65.0,66.7 65.3,63.8 65.5,67.0 65.7,66.1 66.0,65.8 66.2,64.3 66.5,63.5 66.7,63.2 66.9,63.1 67.2,59.3 67.4,55.5 67.7,54.3 67.9,49.1 68.1,43.9 68.4,45.3 68.6,46.8 68.9,48.6 69.1,51.3 69.3,56.5 69.6,58.5 69.8,61.6 70.0,63.7 70.3,65.8 70.5,69.0 70.8,68.3 71.0,68.3 71.2,71.5 71.5,71.3 71.7,72.7 72.0,73.6 72.2,72.4 72.4,72.4 72.7,72.4 72.9,71.1 73.2,73.2 73.4,73.9 73.6,72.3 73.9,71.7 74.1,71.5 74.4,70.7 74.6,70.5 74.8,70.6 75.1,69.7 75.3,69.8 75.6,68.0 75.8,69.9 76.0,69.1 76.3,67.3 76.5,66.8 76.8,70.5 77.0,72.8 77.2,71.4 77.5,72.4 77.7,72.9 78.0,75.1 78.2,73.9 78.4,76.4 78.7,75.2 78.9,76.9 79.2,76.1 79.4,76.1 79.6,74.9 79.9,76.1 80.1,76.9 80.4,78.2 80.6,78.0 80.8,77.1 81.1,78.6 81.3,79.5 81.6,78.4 81.8,78.2 82.0,78.5 82.3,80.1 82.5,80.0 82.8,78.5 83.0,80.2 83.2,79.3 83.5,79.1 83.7,81.6 84.0,81.2 84.2,79.5 84.4,80.6 84.7,81.2 84.9,80.0 85.1,80.7 85.4,81.8 85.6,79.0 85.9,81.6 86.1,82.2 86.3,82.1 86.6,80.1 86.8,82.2 87.1,81.0 87.3,82.9 87.5,83.1 87.8,82.8 88.0,81.9 88.3,82.2 88.5,84.1 88.7,82.2 89.0,84.1 89.2,84.3 89.5,83.5 89.7,86.7 89.9,84.1 90.2,86.6 90.4,81.8 90.7,81.6 90.9,85.5 91.1,85.2 91.4,84.2 91.6,84.6 91.9,82.5 92.1,84.1 92.3,83.7 92.6,84.8 92.8,86.2 93.1,85.3 93.3,85.8 93.5,84.7 93.8,85.1 94.0,85.9 94.3,85.5 94.5,87.5 94.7,85.0 95.0,88.4 95.2,84.8 95.5,87.1 95.7,84.8 95.9,87.6 96.2,85.7 96.4,85.9 96.7,86.2 96.9,84.4 97.1,83.8 97.4,82.6 97.6,86.3 97.9,83.9 98.1,83.9 98.3,84.4 98.6,86.7 98.8,82.1 99.1,84.4 99.3,83.5 99.5,84.5 99.8,81.5 100.0,83.0 100.3,84.2 100.5,84.9 100.7,84.7 101.0,81.6 101.2,82.5 101.4,82.1 101.7,80.4 101.9,80.1 102.2,82.5 102.4,81.7 102.6,81.0 102.9,82.4 103.1,79.5 103.4,81.2 103.6,80.3 103.8,80.0 104.1,80.5 104.3,79.9 104.6,79.8 104.8,79.5 105.0,81.3 105.3,78.4 105.5,79.8 105.8,79.1 106.0,77.7 106.2,78.9 106.5,76.7 106.7,78.9 107.0,76.3 107.2,76.5 107.4,77.2 107.7,77.6 107.9,77.5 108.2,77.3 108.4,75.7 108.6,74.6 108.9,76.2 109.1,75.7 109.4,74.0 109.6,76.1 109.8,74.9 110.1,73.3 110.3,74.9 110.6,72.6 110.8,73.0 111.0,74.4 111.3,71.9 111.5,73.7 111.8,71.9 112.0,74.2 112.2,72.3 112.5,73.3 112.7,71.1 113.0,72.3 113.2,73.7 113.4,73.1 113.7,70.4 113.9,73.6 114.2,73.6 114.4,72.0 114.6,74.2 114.9,71.2 115.1,72.3 115.4,73.7 115.6,73.9 115.8,73.9 116.1,71.0 116.3,70.2 116.5,72.6 116.8,70.2 117.0,71.5 117.3,70.0 117.5,72.5 117.7,72.0 118.0,71.5 118.2,70.6 118.5,70.5 118.7,69.8 118.9,70.4 119.2,70.1 119.4,70.1 119.7,69.0 119.9,71.8 120.1,70.0 120.4,71.4 120.6,71.4 120.9,68.8 121.1,67.9 121.3,71.5 121.6,69.6 121.8,70.3 122.1,70.0 122.3,70.7 122.5,69.4 122.8,70.9 123.0,70.8 123.3,71.5 123.5,69.0 123.7,73.0 124.0,72.7 124.2,70.4 124.5,71.8 124.7,72.8 124.9,73.6 125.2,73.0 125.4,74.7 125.7,73.2 125.9,72.0 126.1,72.5 126.4,74.3 126.6,72.8 126.9,74.6 127.1,74.9 127.3,74.5 127.6,75.1 127.8,73.8 128.1,74.1 128.3,73.5 128.5,73.5 128.8,72.5 129.0,73.8 129.3,73.2 129.5,72.9 129.7,74.8 130.0,75.3 130.2,74.4 130.5,76.5 130.7,76.1 130.9,76.4 131.2,74.5 131.4,73.6 131.6,76.1 131.9,76.0 132.1,76.6 132.4,76.3 132.6,77.5 132.8,75.7 133.1,77.0 133.3,75.3 133.6,73.7 133.8,76.0 134.0,78.4 134.3,74.7 134.5,78.0 134.8,76.0 135.0,76.4 135.2,77.0 135.5,77.2 135.7,75.9 136.0,77.3 136.2,77.7 136.4,78.2 136.7,76.4 136.9,79.2 137.2,79.7 137.4,80.3 137.6,75.8 137.9,77.6 138.1,75.2 138.4,77.8 138.6,78.0 138.8,76.0 139.1,75.5 139.3,77.6 139.6,78.1 139.8,76.3 140.0,76.9 140.3,74.1 140.5,76.2 140.8,77.1 141.0,77.0 141.2,78.7 141.5,75.3 141.7,73.9 142.0,77.0 142.2,75.5 142.4,76.3 142.7,76.6 142.9,76.2 143.2,77.0 143.4,76.6 143.6,72.8 143.9,74.5 144.1,76.7 144.4,73.8 144.6,75.7 144.8,74.6 145.1,74.4 145.3,76.9 145.6,76.5 145.8,75.1 146.0,76.7 146.3,74.2" fill="none" stroke="#6fa2d0" stroke-width="0.5" stroke-linejoin="round" opacity=".85"/><g font-family="Liberation Sans, sans-serif" font-size="2.7" fill="#555" text-anchor="middle"><text x="96" y="39.4">electrospun 1% B MRS</text><text x="96" y="112.3">2θ(°)</text><text x="45.6" y="109.6">10</text><text x="62.5" y="109.6">15</text><text x="79.3" y="109.6">20</text><text x="96.2" y="109.6">25</text><text x="113.0" y="109.6">30</text><text x="129.8" y="109.6">35</text><text x="146.7" y="109.6">40</text><text x="37.4" y="42.6" text-anchor="end">1000</text><text x="37.4" y="56.4" text-anchor="end">800</text><text x="37.4" y="70.1" text-anchor="end">600</text><text x="37.4" y="83.8" text-anchor="end">400</text><text x="37.4" y="97.6" text-anchor="end">200</text><text x="32" y="73" transform="rotate(-90 32 73)">Counts</text></g></svg>
</div>
</body></html>
